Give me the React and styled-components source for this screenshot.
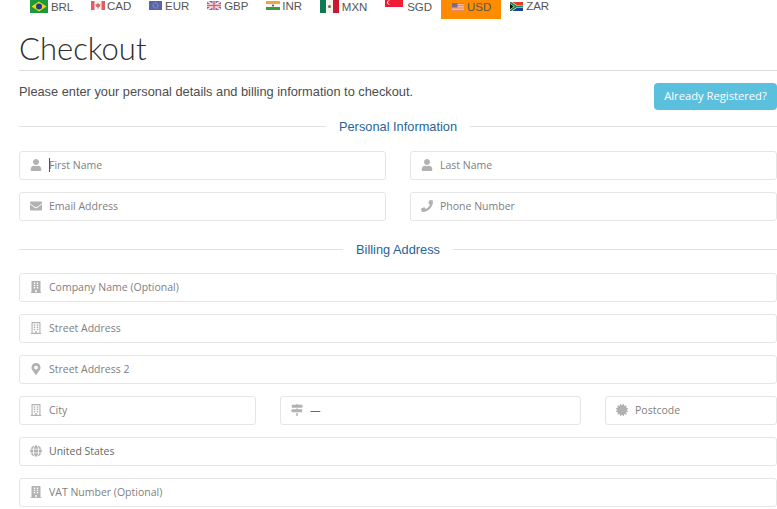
import React from "react";
import styled, { createGlobalStyle } from "styled-components";
import { FaUser, FaEnvelope, FaPhone, FaBuilding, FaRegBuilding, FaMapMarkerAlt, FaMapSigns, FaCertificate, FaGlobe } from "react-icons/fa";

const Global = createGlobalStyle`
  html, body { margin: 0; padding: 0; background: #fff; height: 509px; overflow: hidden; }
  * { box-sizing: border-box; }
  body { font-family: "Liberation Sans", Arial, sans-serif; color: #444; }
`;
const Page = styled.div`width: 777px; height: 509px; overflow: hidden; padding-left: 19px;`;
const CurrencyBar = styled.div`display: flex; height: 19px; margin-left: -19px; padding-left: 21px; overflow: hidden;`;
const Currency = styled.div`
  display: flex; align-items: flex-start; gap: ${p => p.$gap}px; height: 19px; padding: 0 8.9px; flex: none;
  font-size: 11.5px; line-height: 12px; color: #555;
  background: ${p => (p.$active ? "#ff8c00" : "transparent")};
  ${p => p.$active && "padding: 0 10px 0 11px;"}
`;
const Code = styled.span`margin-top: ${p => p.$top}px;`;
const FlagSvg = styled.svg`flex: none; margin-top: ${p => p.$top}px; opacity: ${p => p.$dim ? 0.8 : 1};`;

const Flag = ({ w, h, top, dim, children }) => (
  <FlagSvg $top={top} $dim={dim} width={w} height={h} viewBox={`0 0 ${w} ${h}`}>{children}</FlagSvg>
);
const flags = {
  BRL: <Flag w={18} h={13} top={0}><rect width="18" height="13" fill="#1a9a3a"/><path d="M9 1.5 16.5 6.5 9 11.5 1.5 6.5Z" fill="#f2d21b"/><circle cx="9" cy="6.5" r="3" fill="#1f3d86"/></Flag>,
  CAD: <Flag w={14} h={9} top={1} dim><rect width="14" height="9" fill="#f4eeee"/><rect width="3.5" height="9" fill="#d9333f"/><rect x="10.5" width="3.5" height="9" fill="#d9333f"/><path d="M7 1.5 8 3.5 9.5 3 9 5.5 7.5 6v1.5h-1V6L5 5.500 4.500 3 6 3.500Z" fill="#d9333f"/></Flag>,
  EUR: <Flag w={13} h={9} top={1} dim><rect width="13" height="9" fill="#2f3f98"/><circle cx="6.500" cy="4.500" r="2.500" fill="none" stroke="#d8c84a" strokeWidth=".8" strokeDasharray="1 .8"/></Flag>,
  GBP: <Flag w={14} h={9} top={1} dim><rect width="14" height="9" fill="#3f4fa0"/><path d="M0 0 14 9M14 0 0 9" stroke="#f2dfe2" strokeWidth="1.800"/><path d="M7 0V9M0 4.500H14" stroke="#f2dfe2" strokeWidth="3"/><path d="M7 0V9M0 4.500H14" stroke="#d9394a" strokeWidth="1.500"/></Flag>,
  INR: <Flag w={14} h={9} top={1}><rect width="14" height="3" fill="#f7a33a"/><rect y="3" width="14" height="3" fill="#f6f6f0"/><rect y="6" width="14" height="3" fill="#3d9a3d"/><circle cx="7" cy="4.500" r="1" fill="#3344a0"/></Flag>,
  MXN: <Flag w={19} h={13} top={0}><rect width="6" height="13" fill="#0f7a52"/><rect x="6" width="7" height="13" fill="#f4f4ee"/><rect x="13" width="6" height="13" fill="#c9182f"/><circle cx="9.500" cy="6.500" r="1.500" fill="#7a6a40"/></Flag>,
  SGD: <Flag w={18} h={7} top={0}><rect width="18" height="7" fill="#ee1c35"/><circle cx="4" cy="2.500" r="2" fill="#fff"/><circle cx="4.800" cy="2.500" r="1.800" fill="#ee1c35"/></Flag>,
  USD: <Flag w={12} h={8} top={3} dim><rect width="12" height="8" fill="#f5e2dc"/><path d="M0 .6H12M0 2.800H12M0 5H12M0 7.200H12" stroke="#df6a66" strokeWidth="1.100"/><rect width="5.500" height="4.500" fill="#5763a8"/></Flag>,
  ZAR: <Flag w={13} h={9} top={2}><rect width="13" height="4.500" fill="#df3a30"/><rect y="4.500" width="13" height="4.500" fill="#1e3f96"/><path d="M0 0 6 4.500 0 9M6 4.500H13" fill="none" stroke="#f4f4ee" strokeWidth="3"/><path d="M0 0 6 4.500 0 9M6 4.500H13" fill="none" stroke="#17884a" strokeWidth="1.800"/><path d="M0 1.800 3.500 4.500 0 7.200Z" fill="#111"/></Flag>,
};
const currencies = [
  ["BRL", 3, 1], ["CAD", 2, 0], ["EUR", 3, 0], ["GBP", 3, 0], ["INR", 2, 0], ["MXN", 3, 1], ["SGD", 4, 1], ["USD", 3, 1], ["ZAR", 3, 0],
];

const Title = styled.h1`
  margin: 10px 0 0; font-family: Lato, "Open Sans", sans-serif; font-weight: 300; font-size: 31px; line-height: 39px; color: #2e2e2e;
`;
const Rule = styled.hr`margin: 2px 0 0; border: 0; height: 1px; background: #dedede;`;
const IntroRow = styled.div`display: flex; justify-content: space-between; align-items: flex-start; margin-top: 12px; height: 27px;`;
const Intro = styled.p`margin: 1px 0 0; font-size: 12.8px; line-height: 16px; color: #4d4d4d;`;
const RegisterButton = styled.button`
  width: 123px; height: 27px; border: 0; border-radius: 4px; padding: 0 0 2px; background: #5bc0de; color: #fff;
  font-family: "Open Sans", sans-serif; font-size: 11.2px; cursor: pointer; flex: none;
`;
const Section = styled.div`
  display: flex; align-items: center; gap: 13px; height: 16px; margin-top: ${p => p.$mt}px;
  font-size: 12.8px; color: #2a6496; white-space: nowrap;
  &::before, &::after { content: ""; flex: 1; height: 1px; background: #e2e2e2; }
`;
const Fields = styled.div`
  display: grid; grid-template-columns: ${p => p.$cols || "1fr"}; column-gap: 24px; row-gap: 12px; margin-top: ${p => p.$mt ?? 12}px;
`;
const Field = styled.div`position: relative; height: 29px;`;
const IconSlot = styled.span`
  position: absolute; left: 10px; top: 0; width: 14px; height: 28px; display: flex; align-items: center; justify-content: center;
  color: #b2b2b2; font-size: 12px; pointer-events: none;
`;
const Input = styled.input`
  display: block; width: 100%; height: 29px; padding: 0 8px 1px 29px; border: 1px solid #e5e5e5; border-radius: 3px;
  background: #fff; outline: none; font-family: "Open Sans", sans-serif; font-size: 10.5px; color: #666;
  &::placeholder { color: #808080; opacity: 1; }
`;
const Caret = styled.span`position: absolute; left: 30px; top: 7px; width: 1px; height: 14px; background: #555;`;

const TextField = ({ icon, text, value, caret }) => (
  <Field>
    <Input placeholder={text} defaultValue={value} readOnly={value !== undefined} />
    <IconSlot>{icon}</IconSlot>
    {caret && <Caret />}
  </Field>
);

export default function App() {
  return (
    <Page>
      <Global />
      <CurrencyBar>
        {currencies.map(([c, gap, top]) => (
          <Currency key={c} $gap={gap} $active={c === "USD"}>
            {flags[c]}
            <Code $top={top}>{c}</Code>
          </Currency>
        ))}
      </CurrencyBar>
      <Title>Checkout</Title>
      <Rule />
      <IntroRow>
        <Intro>Please enter your personal details and billing information to checkout.</Intro>
        <RegisterButton>Already Registered?</RegisterButton>
      </IntroRow>
      <Section $mt={8}>Personal Information</Section>
      <Fields $cols="1fr 1fr" $mt={17}>
        <TextField icon={<FaUser />} text="First Name" caret />
        <TextField icon={<FaUser />} text="Last Name" />
        <TextField icon={<FaEnvelope />} text="Email Address" />
        <TextField icon={<FaPhone style={{ transform: "scaleX(1)" }} />} text="Phone Number" />
      </Fields>
      <Section $mt={20}>Billing Address</Section>
      <Fields $mt={16}>
        <TextField icon={<FaBuilding />} text="Company Name (Optional)" />
        <TextField icon={<FaRegBuilding />} text="Street Address" />
        <TextField icon={<FaMapMarkerAlt />} text="Street Address 2" />
      </Fields>
      <Fields $cols="237px 301px 1fr">
        <TextField icon={<FaRegBuilding />} text="City" />
        <TextField icon={<FaMapSigns />} value="—" />
        <TextField icon={<FaCertificate />} text="Postcode" />
      </Fields>
      <Fields>
        <TextField icon={<FaGlobe />} value="United States" />
        <TextField icon={<FaBuilding />} text="VAT Number (Optional)" />
      </Fields>
    </Page>
  );
}
